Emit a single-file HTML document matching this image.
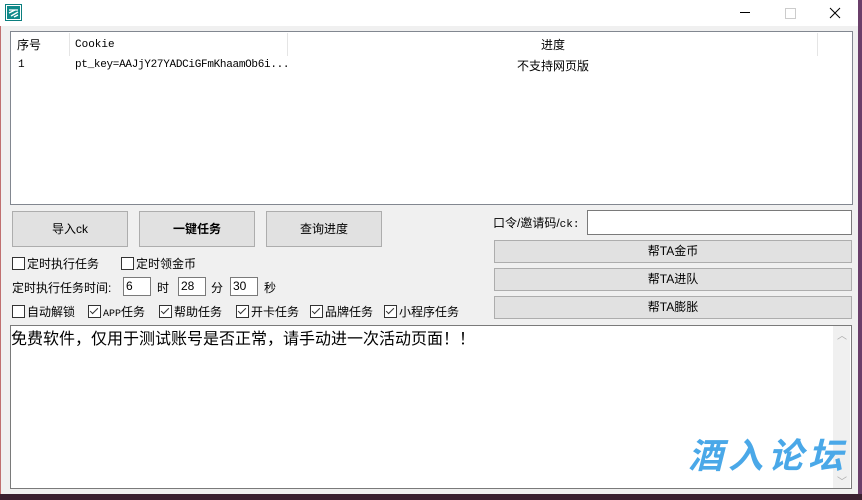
<!DOCTYPE html><html><head><meta charset="utf-8"><style>
body{margin:0;width:862px;height:500px;overflow:hidden;background:#6a3f6a;font-family:"Liberation Sans","Noto Sans CJK SC",sans-serif;font-size:12px;color:#000;position:relative}
.a{position:absolute}
.win{left:0;top:0;width:858px;height:494px;background:#f0f0f0}
.btn{position:absolute;background:#e1e1e1;border:1px solid #adadad;box-sizing:border-box;text-align:center}
.cb{position:absolute;width:11px;height:11px;border:1px solid #333;background:#fff}
.cb.c::after{content:"";position:absolute;left:3px;top:0px;width:3px;height:7px;border:solid #333;border-width:0 1px 1px 0;transform:rotate(45deg)}
.in{position:absolute;background:#fff;border:1px solid #7a7a7a;box-sizing:border-box;font-size:12px;padding-left:2px}
.mono{font-family:"Liberation Mono","Noto Sans CJK SC",monospace;font-size:11px}
</style></head><body>
<div class="a" style="left:0;top:494px;width:862px;height:6px;background:#3a2030"></div>
<div class="a win">
<div class="a" style="left:0;top:0;width:858px;height:26px;background:#fff"></div>
<div class="a" style="left:0;top:26px;width:1px;height:468px;background:#c07070"></div>
<svg class="a" style="left:5px;top:4px" width="17" height="17"><rect x="0.5" y="0.5" width="16" height="16" fill="#fff" stroke="#0b7f7f"/><rect x="2" y="2" width="13" height="13" fill="#108a8a"/><path d="M4 6h9M4 9l6-3M6 12l7-4M9 13l4-2" stroke="#fff" stroke-width="1.3"/></svg>
<div class="a" style="left:740px;top:12px;width:10px;height:1px;background:#000"></div>
<div class="a" style="left:785px;top:8px;width:9px;height:9px;border:1px solid #ccc"></div>
<svg class="a" style="left:829px;top:7px" width="12" height="12"><path d="M1 1L11 11M11 1L1 11" stroke="#000"/></svg>
<div class="a" style="left:10px;top:31px;width:841px;height:172px;background:#fff;border:1px solid #828790"></div>
<div class="a" style="left:69px;top:33px;width:1px;height:23px;background:#e5e5e5"></div>
<div class="a" style="left:287px;top:33px;width:1px;height:23px;background:#e5e5e5"></div>
<div class="a" style="left:817px;top:33px;width:1px;height:23px;background:#e5e5e5"></div>
<div class="a" style="left:17px;top:36px">序号</div>
<div class="a mono" style="left:75px;top:39px">Cookie</div>
<div class="a" style="left:541px;top:36px">进度</div>
<div class="a mono" style="left:18px;top:59px">1</div>
<div class="a mono" style="left:75px;top:59px;letter-spacing:-0.3px">pt_key=AAJjY27YADCiGFmKhaamOb6i...</div>
<div class="a" style="left:517px;top:57px">不支持网页版</div>
<div class="btn" style="left:12px;top:211px;width:116px;height:36px;line-height:34px">导入ck</div>
<div class="btn" style="left:139px;top:211px;width:116px;height:36px;line-height:34px;font-weight:bold">一键任务</div>
<div class="btn" style="left:266px;top:211px;width:116px;height:36px;line-height:34px">查询进度</div>
<div class="cb" style="left:12px;top:257px"></div><div class="a" style="left:27px;top:255px">定时执行任务</div>
<div class="cb" style="left:121px;top:257px"></div><div class="a" style="left:136px;top:255px">定时领金币</div>
<div class="a" style="left:12px;top:279px">定时执行任务时间:</div>
<div class="in" style="left:123px;top:277px;width:28px;height:19px;line-height:17px">6</div>
<div class="a" style="left:157px;top:279px">时</div>
<div class="in" style="left:178px;top:277px;width:28px;height:19px;line-height:17px">28</div>
<div class="a" style="left:211px;top:279px">分</div>
<div class="in" style="left:230px;top:277px;width:28px;height:19px;line-height:17px">30</div>
<div class="a" style="left:264px;top:279px">秒</div>
<div class="cb" style="left:12px;top:305px"></div><div class="a" style="left:27px;top:303px">自动解锁</div>
<div class="cb c" style="left:88px;top:305px"></div><div class="a" style="left:103px;top:303px"><span class="mono" style="font-size:10px">APP</span>任务</div>
<div class="cb c" style="left:159px;top:305px"></div><div class="a" style="left:174px;top:303px">帮助任务</div>
<div class="cb c" style="left:236px;top:305px"></div><div class="a" style="left:251px;top:303px">开卡任务</div>
<div class="cb c" style="left:310px;top:305px"></div><div class="a" style="left:325px;top:303px">品牌任务</div>
<div class="cb c" style="left:384px;top:305px"></div><div class="a" style="left:399px;top:303px">小程序任务</div>
<div class="a" style="left:493px;top:214px">口令/邀请码/<span class="mono">ck:</span></div>
<div class="in" style="left:587px;top:210px;width:265px;height:25px"></div>
<div class="btn" style="left:494px;top:240px;width:358px;height:23px;line-height:21px">帮TA金币</div>
<div class="btn" style="left:494px;top:268px;width:358px;height:23px;line-height:21px">帮TA进队</div>
<div class="btn" style="left:494px;top:296px;width:358px;height:23px;line-height:21px">帮TA膨胀</div>
<div class="a" style="left:10px;top:325px;width:840px;height:162px;background:#fff;border:1px solid #7a7a7a"></div>
<div class="a" style="left:833px;top:326px;width:17px;height:162px;background:#f0f0f0"></div>
<div class="a" style="left:837px;top:327px;color:#aaa;font-size:10px">︿</div>
<div class="a" style="left:837px;top:473px;color:#aaa;font-size:10px">﹀</div>
<div class="a" style="left:11px;top:325px;font-size:16px">免费软件，仅用于测试账号是否正常，请手动进一次活动页面！！</div>
<div class="a" style="left:688px;top:437px;font-size:35px;font-weight:bold;font-style:italic;color:#4aa8e8;letter-spacing:5px;line-height:40px">酒入论坛</div>
</div>
</body></html>
